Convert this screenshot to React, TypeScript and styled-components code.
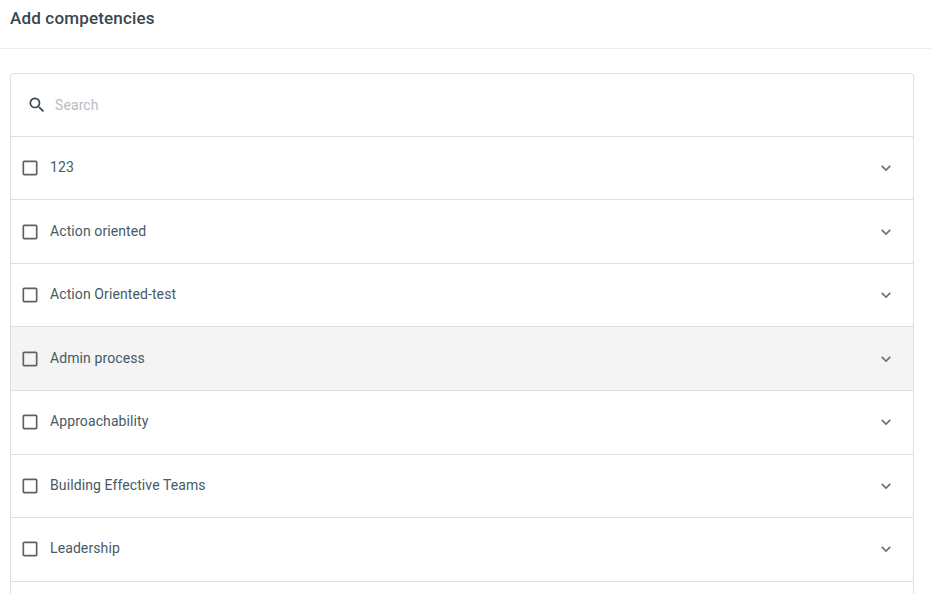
import React from 'react'
import styled, { createGlobalStyle } from 'styled-components'

const GlobalStyle = createGlobalStyle`
  html, body {
    margin: 0;
    padding: 0;
    height: 100%;
    overflow: hidden;
    background: #ffffff;
    font-family: Roboto, "Liberation Sans", sans-serif;
  }
`

const Header = styled.div`
  display: flex;
  align-items: center;
  height: 49px;
  padding: 0 10px 13px;
  box-sizing: border-box;
  border-bottom: 1px solid #eeeeee;
`

const Title = styled.h1`
  margin: 0;
  font-size: 17px;
  font-weight: 500;
  line-height: 24px;
  letter-spacing: 0.17px;
  color: #37474f;
`

const Card = styled.div`
  margin: 24px 17px 0 10px;
  border: 1px solid #dfdfdf;
  border-radius: 4px;
  border-bottom: none;
`

const SearchBar = styled.div`
  display: flex;
  align-items: center;
  gap: 8px;
  height: 61.75px;
  padding: 0 16px;
`

const SearchText = styled.span`
  font-size: 14px;
  letter-spacing: 0.1px;
  color: #b8bcbf;
`

const Row = styled.div<{ $hovered?: boolean }>`
  display: flex;
  align-items: center;
  height: 63.5625px;
  box-sizing: border-box;
  padding: 0 15px 0 9px;
  border-top: 1px solid #dfdfdf;
  background: ${(p) => (p.$hovered ? '#f4f4f4' : '#ffffff')};
`

const Label = styled.span`
  flex: 1;
  margin-left: 10px;
  padding-bottom: 1.85px;
  font-size: 14px;
  letter-spacing: 0.1px;
  color: #455a64;
`

const SearchIcon = () => (
  <svg width="20" height="20" viewBox="0 0 24 24" fill="#37474f">
    <path d="M15.5 14h-.79l-.28-.27A6.471 6.471 0 0 0 16 9.5 6.5 6.5 0 1 0 9.5 16c1.61 0 3.09-.59 4.23-1.57l.27.28v.79l5 4.99L20.49 19l-4.99-5zm-6 0C7.01 14 5 11.99 5 9.5S7.01 5 9.5 5 14 7.01 14 9.5 11.99 14 9.5 14z" />
  </svg>
)

const CheckIcon = () => (
  <svg width="20" height="20" viewBox="0 0 24 24" fill="#616161">
    <path d="M19 5v14H5V5h14m0-2H5c-1.1 0-2 .9-2 2v14c0 1.1.9 2 2 2h14c1.1 0 2-.9 2-2V5c0-1.1-.9-2-2-2z" />
  </svg>
)

const Chevron = () => (
  <svg width="24" height="24" viewBox="0 0 24 24" fill="#6e6e6e">
    <path d="M16.59 8.59 12 13.17 7.41 8.59 6 10l6 6 6-6z" transform="translate(12 12) scale(0.8) translate(-12 -12)" />
  </svg>
)

const items = [
  '123',
  'Action oriented',
  'Action Oriented-test',
  'Admin process',
  'Approachability',
  'Building Effective Teams',
  'Leadership',
  '',
]

export default function App() {
  return (
    <>
      <GlobalStyle />
      <Header>
        <Title>Add competencies</Title>
      </Header>
      <Card>
        <SearchBar>
          <SearchIcon />
          <SearchText>Search</SearchText>
        </SearchBar>
        {items.map((item, i) => (
          <Row key={i} $hovered={item === 'Admin process'}>
            <CheckIcon />
            <Label>{item}</Label>
            <Chevron />
          </Row>
        ))}
      </Card>
    </>
  )
}
